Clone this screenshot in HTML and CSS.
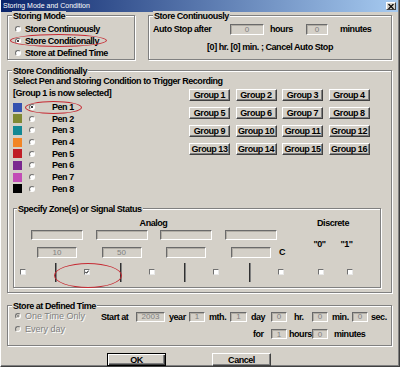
FILE: index.html
```html
<!DOCTYPE html>
<html>
<head>
<meta charset="utf-8">
<title>Storing Mode and Condition</title>
<link rel="stylesheet" href="styles.css">
</head>
<body>
<div class="window">
  <div class="titlebar">
    <span class="title">Storing Mode and Condition</span>
    <span class="close"><svg width="6" height="5" viewBox="0 0 6 5"><path d="M0.5 0 L5.5 5 M5.5 0 L0.5 5" stroke="#000" stroke-width="1.2"/></svg></span>
  </div>
  <div class="body">
    <div class="row1">
      <div class="group g-mode">
        <div class="legend">Storing Mode</div>
        <div class="radio-list">
          <div class="opt"><span class="rb"></span>Store Continuously</div>
          <div class="opt"><span class="rb on"></span>Store Conditionally</div>
          <div class="opt"><span class="rb"></span>Store at Defined Time</div>
        </div>
      </div>
      <div class="group g-cont">
        <div class="legend">Store Continuously</div>
        <div class="auto-row">
          <span class="lbl-auto">Auto Stop after</span>
          <span class="box w34">0</span>
          <span class="lbl-hours">hours</span>
          <span class="box w22">0</span>
          <span class="lbl-min">minutes</span>
        </div>
        <div class="cancel-line">[0] hr. [0] min. ; Cancel Auto Stop</div>
      </div>
    </div>

    <div class="group g-cond">
      <div class="legend">Store Conditionally</div>
      <div class="cond-intro">Select Pen and Storing Condition to Trigger Recording</div>
      <div class="cond-main">
        <div class="pens">
          <div class="sel-note">[Group 1 is now selected]</div>
          <div class="pen-list">
            <div class="pen"><span class="swatch c1"></span><span class="rb on"></span>Pen 1</div>
            <div class="pen"><span class="swatch c2"></span><span class="rb"></span>Pen 2</div>
            <div class="pen"><span class="swatch c3"></span><span class="rb"></span>Pen 3</div>
            <div class="pen"><span class="swatch c4"></span><span class="rb"></span>Pen 4</div>
            <div class="pen"><span class="swatch c5"></span><span class="rb"></span>Pen 5</div>
            <div class="pen"><span class="swatch c6"></span><span class="rb"></span>Pen 6</div>
            <div class="pen"><span class="swatch c7"></span><span class="rb"></span>Pen 7</div>
            <div class="pen"><span class="swatch c8"></span><span class="rb"></span>Pen 8</div>
          </div>
        </div>
        <div class="groups">
          <span class="gbtn">Group 1</span><span class="gbtn">Group 2</span><span class="gbtn">Group 3</span><span class="gbtn">Group 4</span>
          <span class="gbtn">Group 5</span><span class="gbtn">Group 6</span><span class="gbtn">Group 7</span><span class="gbtn">Group 8</span>
          <span class="gbtn">Group 9</span><span class="gbtn">Group 10</span><span class="gbtn">Group 11</span><span class="gbtn">Group 12</span>
          <span class="gbtn">Group 13</span><span class="gbtn">Group 14</span><span class="gbtn">Group 15</span><span class="gbtn">Group 16</span>
        </div>
      </div>

      <div class="group g-zone">
        <div class="legend">Specify Zone(s) or Signal Status</div>
        <div class="zone-body">
          <div class="analog">
            <div class="analog-title">Analog</div>
            <div class="zrow-b">
              <span class="box w52"></span><span class="box w52"></span><span class="box w52"></span><span class="box w52"></span>
            </div>
            <div class="zrow-c">
              <span class="box w40">10</span><span class="box w40">50</span><span class="box w40"></span><span class="box w40"></span><span class="unit">C</span>
            </div>
            <div class="zrow-d">
              <span class="cb first"></span>
              <span class="zcell"><span class="divider"></span><span class="cb checked"><svg width="4" height="4" viewBox="0 0 4 4"><path d="M0.3 1.8 L1.5 3.2 L3.7 0.6" fill="none" stroke="#000" stroke-width="1"/></svg></span></span>
              <span class="zcell"><span class="divider"></span><span class="cb"></span></span>
              <span class="zcell"><span class="divider"></span><span class="cb"></span></span>
              <span class="zcell"><span class="divider"></span><span class="cb"></span></span>
            </div>
          </div>
          <div class="discrete">
            <div class="disc-title">Discrete</div>
            <div class="disc-q"><span class="q0">"0"</span><span class="q1">"1"</span></div>
            <div class="disc-cb"><span class="cb d0"></span><span class="cb d1"></span></div>
          </div>
        </div>
      </div>
    </div>

    <div class="group g-time">
      <div class="legend">Store at Defined Time</div>
      <div class="time-body">
        <div class="time-radios">
          <div class="opt2 dis"><span class="rb on dis"></span>One Time Only</div>
          <div class="opt2 dis"><span class="rb dis"></span>Every day</div>
        </div>
        <div class="time-grid">
          <span class="tl first">Start at</span>
          <span class="box tb">2003</span>
          <span class="tl">year</span>
          <span class="box tb">1</span>
          <span class="tl">mth.</span>
          <span class="box tb">1</span>
          <span class="tl">day</span>
          <span class="box tb">0</span>
          <span class="tl hr">hr.</span>
          <span class="box tb">0</span>
          <span class="tl">min.</span>
          <span class="box tb">0</span>
          <span class="tl sec">sec.</span>
          <span class="tl for">for</span>
          <span class="box tb">1</span>
          <span class="tl hrs">hours</span>
          <span class="box tb">0</span>
          <span class="tl mins">minutes</span>
        </div>
      </div>
    </div>

    <div class="dlg-buttons">
      <span class="btn default">OK</span>
      <span class="btn">Cancel</span>
    </div>
  </div>

  <span class="mark m1"></span>
  <span class="mark m2"></span>
  <span class="mark m3"></span>
</div>
</body>
</html>
```

FILE: styles.css
```css
* { box-sizing: border-box; }
html, body { margin: 0; padding: 0; }
body {
  width: 400px;
  height: 367px;
  overflow: hidden;
  background: #d4d0c8;
  font-family: "Liberation Sans", Arial, sans-serif;
  font-size: 9px;
  letter-spacing: -0.45px;
  font-weight: bold;
  color: #000;
}
.window {
  position: relative;
  width: 400px;
  height: 367px;
  background: #d4d0c8;
  border-left: 1px solid #fff;
  border-right: 1px solid #404040;
  border-bottom: 1px solid #404040;
  box-shadow: inset -1px -1px 0 #808080;
}
.titlebar {
  height: 12px;
  margin-right: 1px;
  background: linear-gradient(to right, #0a246a, #a6caf0);
  display: flex;
  align-items: center;
  justify-content: space-between;
  padding: 0 2px;
}
.title { color: #fff; font-weight: normal; font-size: 7px; letter-spacing: 0; line-height: 12px; }
.close {
  width: 10px;
  height: 8px;
  background: #d4d0c8;
  border: 1px solid;
  border-color: #fff #404040 #404040 #fff;
  display: flex;
  align-items: center;
  justify-content: center;
}
.close svg { display: block; }
.body { padding: 3px 0 0 6px; }

/* group boxes */
.group {
  border: 1px solid #808080;
  box-shadow: inset 1px 1px 0 #fff, 1px 1px 0 #fff;
}
.legend {
  width: max-content;
  margin: -5px 0 0 4px;
  padding: 0 1px;
  background: #d4d0c8;
  line-height: 10px;
}

/* radios */
.rb {
  display: inline-block;
  flex: none;
  width: 6px;
  height: 6px;
  border-radius: 50%;
  background: #fff;
  border: 1px solid;
  border-color: #707070 #fff #fff #707070;
  position: relative;
}
.rb.on::after {
  content: "";
  position: absolute;
  left: 1px;
  top: 1px;
  width: 2px;
  height: 2px;
  background: #000;
  border-radius: 50%;
}
.rb.dis { background: #d4d0c8; }
.rb.on.dis::after { background: #808080; }

.row1 { display: flex; }
.g-mode { width: 128px; height: 45px; }
.g-cont { width: 244px; height: 45px; margin-left: 13px; }
.radio-list { margin-top: 2px; }
.opt { height: 12px; display: flex; align-items: center; padding-left: 7px; }
.opt .rb { margin-right: 4px; }

.auto-row { margin-top: 2px; height: 12px; display: flex; align-items: center; padding-left: 4px; }
.lbl-auto { width: 77px; }
.lbl-hours { margin-left: 6px; width: 36px; }
.lbl-min { margin-left: 12px; }
.cancel-line { margin-top: 6px; height: 12px; line-height: 12px; text-align: center; }

/* input boxes */
.box {
  display: flex;
  flex: none;
  align-items: center;
  justify-content: center;
  height: 11px;
  background: #d4d0c8;
  border: 1px solid;
  border-color: #6a6a6a #fff #fff #6a6a6a;
  box-shadow: inset 1px 1px 0 #b0aca4;
  color: #808080;
  font-weight: normal;
  font-size: 8px;
  letter-spacing: 0;
}
.w34 { width: 34px; }
.w22 { width: 22px; }
.w52 { width: 52px; height: 10px; }
.w40 { width: 40px; }

/* store conditionally */
.g-cond { width: 385px; height: 223px; margin-top: 10px; }
.cond-intro { padding-left: 5px; line-height: 11px; }
.cond-main { display: flex; }
.pens { width: 181px; padding-left: 5px; flex: none; }
.sel-note { line-height: 12px; }
.pen-list { margin-top: 2.2px; }
.pen { height: 11.7px; display: flex; align-items: center; }
.swatch { width: 9px; height: 9px; flex: none; }
.pen .rb { margin-left: 7px; margin-right: 17px; }
.c1 { background: #3552b0; }
.c2 { background: #7f8833; }
.c3 { background: #128894; }
.c4 { background: #f28526; }
.c5 { background: #c01e27; }
.c6 { background: #7a288f; }
.c7 { background: #c24db6; }
.c8 { background: #000; }

.groups {
  display: grid;
  grid-template-columns: repeat(4, 41px);
  grid-auto-rows: 12px;
  column-gap: 5.5px;
  row-gap: 6px;
  margin-top: 2px;
}
.gbtn {
  display: flex;
  align-items: center;
  justify-content: center;
  border: 1px solid;
  border-color: #fff #404040 #404040 #fff;
  box-shadow: inset -1px -1px 0 #808080;
  white-space: nowrap;
}

/* zone */
.g-zone { width: 368px; height: 80px; margin: 13.2px 0 0 5px; }
.g-zone .legend { margin-left: 3px; }
.zone-body { display: flex; margin-top: 4px; }
.analog { width: 294px; flex: none; }
.analog-title { margin-left: 17px; width: 245px; text-align: center; line-height: 10px; }
.zrow-b { display: flex; gap: 12.5px; padding-left: 17px; margin-top: 2px; }
.zrow-c { display: flex; gap: 24.5px; padding-left: 23px; margin-top: 7px; align-items: center; }
.unit { margin-left: -16px; }
.zrow-d { display: flex; align-items: center; margin-top: 5px; height: 19px; }
.cb {
  display: flex;
  align-items: center;
  justify-content: center;
  flex: none;
  width: 6px;
  height: 6px;
  background: #fff;
  border: 1px solid;
  border-color: #707070 #e8e8e8 #e8e8e8 #707070;
}
.cb svg { display: block; }
.cb.first { margin-left: 6px; margin-right: 5px; }
.zcell { width: 64.5px; flex: none; display: flex; align-items: center; height: 19px; }
.divider { width: 2px; height: 19px; margin-left: 24px; background: linear-gradient(to right, #303030 50%, #808080 50%); }
.zcell .cb { margin-left: 27px; }
.discrete { width: 50px; flex: none; }
.disc-title { text-align: center; line-height: 10px; }
.disc-q { display: flex; margin-top: 11px; line-height: 10px; }
.q0, .q1 { width: 24px; text-align: center; }
.q1 { margin-left: 4px; }
.disc-cb { display: flex; align-items: center; height: 19px; margin-top: 14px; }
.cb.d0 { margin-left: 10px; }
.cb.d1 { margin-left: 23px; }

/* defined time */
.g-time { width: 385px; height: 41px; margin-top: 12px; }
.time-body { display: flex; margin-top: -1px; }
.time-radios { width: 93px; flex: none; }
.opt2 { height: 12.5px; display: flex; align-items: center; padding-left: 7px; }
.opt2 .rb { margin-right: 4px; }
.opt2.dis { color: #808080; font-weight: normal; letter-spacing: 0; text-shadow: 1px 1px 0 #fff; }
.time-grid {
  display: grid;
  grid-template-columns: 35px 29px 24px 16px 25px 17px 24px 16px 25px 16px 24px 16px auto;
  grid-template-rows: 12px 12px;
  row-gap: 5.5px;
  margin-top: 0.5px;
  align-items: center;
}
.tl { padding-left: 4px; white-space: nowrap; }
.tl.first { padding-left: 0; }
.tl.hr { padding-left: 7px; }
.tl.sec { padding-left: 3px; }
.tb { height: 10px; }
.tl.for { grid-column: 7; grid-row: 2; padding-left: 6px; }
.time-grid .tl.for + .tb { grid-column: 8; grid-row: 2; }
.tl.hrs { grid-column: 9; grid-row: 2; padding-left: 2px; }
.tl.hrs + .tb { grid-column: 10; grid-row: 2; }
.tl.mins { grid-column: 11 / span 3; grid-row: 2; padding-left: 6px; }

/* dialog buttons */
.dlg-buttons { display: flex; gap: 46px; margin: 7px 0 0 100px; }
.btn {
  display: flex;
  align-items: center;
  justify-content: center;
  width: 59px;
  height: 13px;
  border: 1px solid;
  border-color: #fff #404040 #404040 #fff;
  box-shadow: inset -1px -1px 0 #808080;
}
.btn.default {
  border-color: #000;
  box-shadow: inset 1px 1px 0 #fff, inset -1px -1px 0 #404040, inset -2px -2px 0 #808080;
}

/* annotation ellipses */
.mark {
  position: absolute;
  border: 1.5px solid #c62a33;
  border-radius: 50%;
}
.m1 { left: 9px; top: 34px; width: 97px; height: 13px; }
.m2 { left: 24px; top: 101px; width: 57px; height: 13px; }
.m3 { left: 53px; top: 263px; width: 68px; height: 25px; }
```
